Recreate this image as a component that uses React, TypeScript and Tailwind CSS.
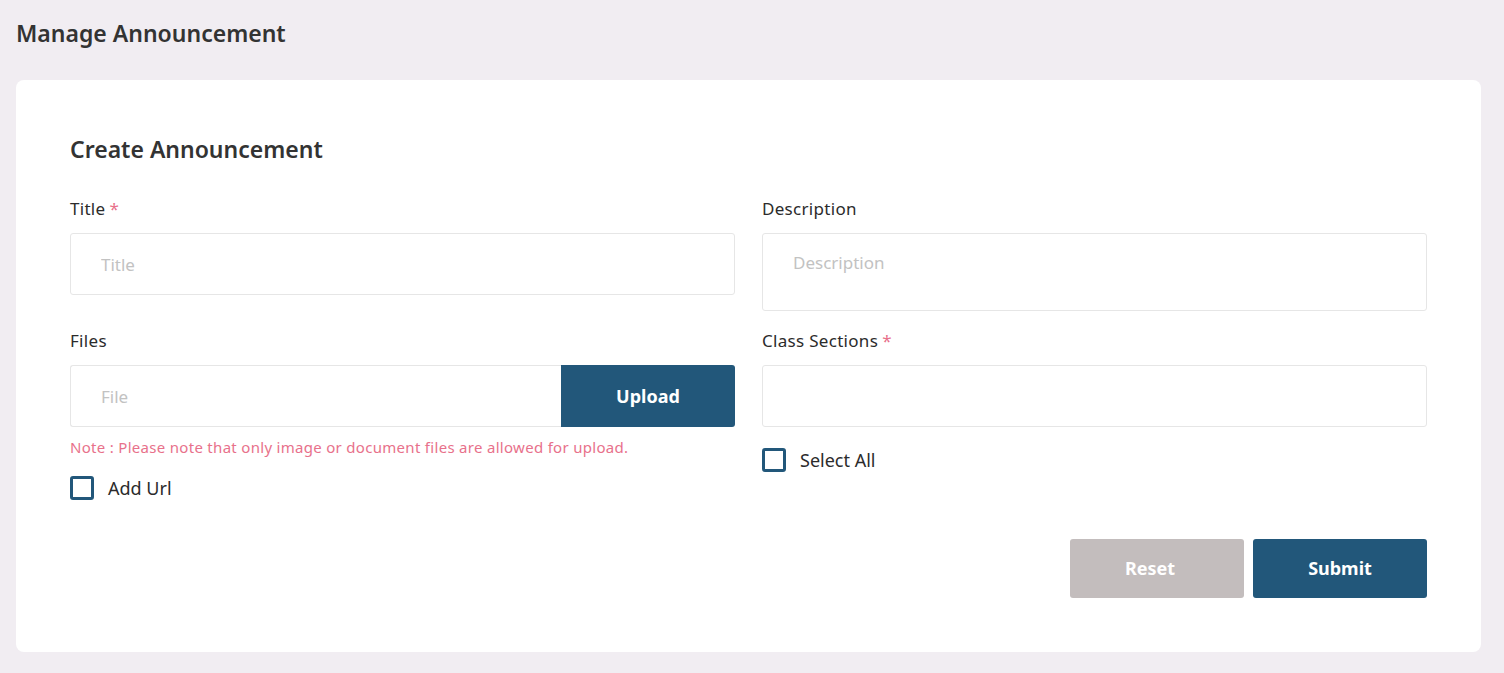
import React, { useState } from "react";

const font = "font-['Noto_Sans','Liberation_Sans',sans-serif]";

interface CheckProps {
  label: string;
  className?: string;
}

const CheckRow: React.FC<CheckProps> = ({ label, className }) => {
  const [checked, setChecked] = useState(false);
  return (
    <label className={`flex items-center gap-[14px] cursor-pointer ${className ?? ""}`}>
      <span
        onClick={() => setChecked(!checked)}
        className="w-6 h-6 border-[3px] border-[#22577a] rounded-[3px] flex items-center justify-center"
      >
        {checked && <span className="w-2.5 h-2.5 bg-[#22577a] rounded-[1px]" />}
      </span>
      <span className="text-[18px] text-[#2b2b2b] leading-6">{label}</span>
    </label>
  );
};

const Label: React.FC<{ text: string; required?: boolean }> = ({ text, required }) => (
  <div className="text-[17px] tracking-[0.3px] leading-6 text-[#2b2b2b] mb-3">
    {text}
    {required && <span className="text-[#e8718b] ml-1">*</span>}
  </div>
);

const inputCls =
  "w-full h-[62px] border border-[#e6e6e6] rounded-[3px] px-[30px] text-[17px] text-[#333] placeholder:text-[#c2c2c2] outline-none";

export default function App() {
  return (
    <div className={`min-h-[673px] bg-[#f1edf2] px-4 pt-[18px] pb-[21px] ${font}`}>
      <h1 className="text-[23px] leading-[30px] font-semibold text-[#333]">Manage Announcement</h1>
      <div className="mt-8 bg-white rounded-lg p-[54px] mr-[7px]">
        <h2 className="text-[23px] leading-[30px] font-semibold text-[#333]">Create Announcement</h2>
        <div className="grid grid-cols-2 gap-x-[27px] gap-y-[18px] mt-[33px]">
          <div>
            <Label text="Title" required />
            <input className={inputCls} placeholder="Title" />
          </div>
          <div>
            <Label text="Description" />
            <textarea
              className="w-full h-[78px] border border-[#e6e6e6] rounded-[3px] px-[30px] pt-[16px] text-[17px] text-[#333] placeholder:text-[#c2c2c2] outline-none resize-none block"
              placeholder="Description"
            />
          </div>
          <div>
            <Label text="Files" />
            <div className="flex h-[62px]">
              <input
                className="flex-1 h-full border border-[#e6e6e6] border-r-0 rounded-l-[3px] px-[30px] text-[17px] placeholder:text-[#c2c2c2] outline-none"
                placeholder="File"
              />
              <button className="w-[174px] h-full bg-[#22577a] text-white font-bold text-[18px] rounded-r-[3px]">
                Upload
              </button>
            </div>
            <p className="mt-[10px] text-[15px] tracking-[0.3px] leading-5 text-[#e8718b]">
              Note : Please note that only image or document files are allowed for upload.
            </p>
            <CheckRow label="Add Url" className="mt-[19px]" />
          </div>
          <div>
            <Label text="Class Sections" required />
            <input className={inputCls} />
            <CheckRow label="Select All" className="mt-[21px]" />
          </div>
        </div>
        <div className="flex justify-end gap-[9px] mt-[39px]">
          <button className="w-[174px] h-[59px] pr-[14px] bg-[#c3bdbd] text-white font-bold text-[18px] rounded-[3px]">
            Reset
          </button>
          <button className="w-[174px] h-[59px] bg-[#22577a] text-white font-bold text-[18px] rounded-[3px]">
            Submit
          </button>
        </div>
      </div>
    </div>
  );
}
